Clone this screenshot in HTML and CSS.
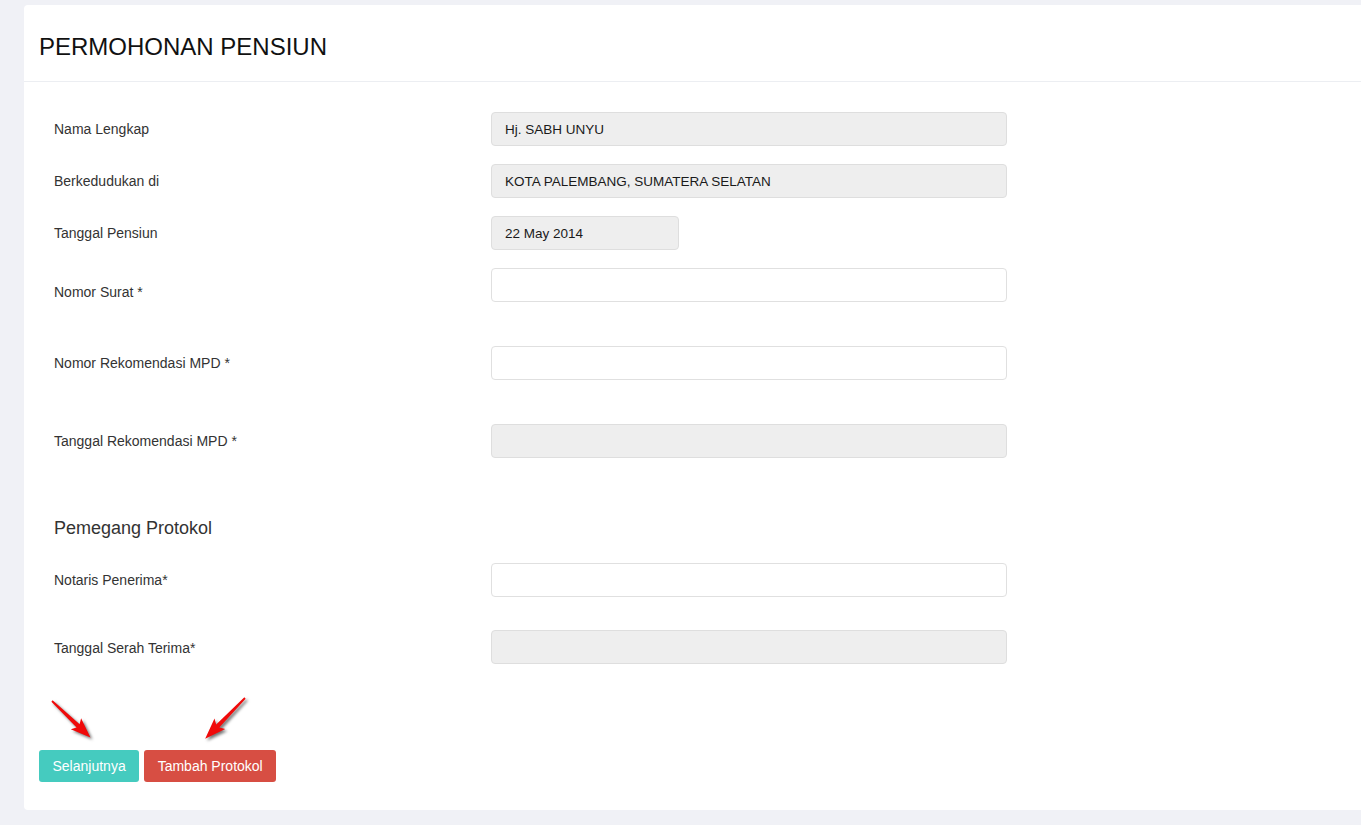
FILE: index.html
```html
<!DOCTYPE html>
<html lang="id">
<head>
<meta charset="utf-8">
<title>Permohonan Pensiun</title>
<link rel="stylesheet" href="styles.css">
</head>
<body>
<div class="card">
  <div class="card-header">
    <h1 class="card-title">PERMOHONAN PENSIUN</h1>
  </div>
  <form class="card-body">
    <div class="form-row">
      <label class="form-label">Nama Lengkap</label>
      <div class="form-control readonly">Hj. SABH UNYU</div>
    </div>
    <div class="form-row">
      <label class="form-label">Berkedudukan di</label>
      <div class="form-control readonly">KOTA PALEMBANG, SUMATERA SELATAN</div>
    </div>
    <div class="form-row">
      <label class="form-label">Tanggal Pensiun</label>
      <div class="form-control readonly short">22 May 2014</div>
    </div>
    <div class="form-row tall">
      <label class="form-label low">Nomor Surat *</label>
      <div class="form-control"></div>
    </div>
    <div class="form-row tall">
      <label class="form-label">Nomor Rekomendasi MPD *</label>
      <div class="form-control"></div>
    </div>
    <div class="form-row last">
      <label class="form-label">Tanggal Rekomendasi MPD *</label>
      <div class="form-control readonly"></div>
    </div>
    <h2 class="section-title">Pemegang Protokol</h2>
    <div class="form-row mid">
      <label class="form-label">Notaris Penerima*</label>
      <div class="form-control"></div>
    </div>
    <div class="form-row final">
      <label class="form-label">Tanggal Serah Terima*</label>
      <div class="form-control readonly"></div>
    </div>
    <div class="actions">
      <svg class="arrows" width="300" height="60" viewBox="0 0 300 60">
        <g fill="#f00a0a">
          <polygon transform="translate(13,11) rotate(43.5)" points="0,-0.9 36,-2.2 33,-7.5 53,0 33,7.5 36,2.2 0,0.9"/>
          <polygon transform="translate(206,8) rotate(134.3)" points="0,-0.9 39,-2.2 36,-7.5 57,0 36,7.5 39,2.2 0,0.9"/>
        </g>
      </svg>
      <button type="button" class="btn btn-teal">Selanjutnya</button>
      <button type="button" class="btn btn-red">Tambah Protokol</button>
    </div>
  </form>
</div>
</body>
</html>
```
FILE: styles.css
```css
html, body {
  margin: 0;
  padding: 0;
  overflow: hidden;
  height: 100%;
}
body {
  background: #f0f1f6;
  font-family: "Liberation Sans", Arial, sans-serif;
  color: #333;
  padding-top: 5px;
  box-sizing: border-box;
}
.card {
  background: #fff;
  margin-left: 24px;
  margin-right: -12px;
  border-radius: 4px;
}
.card-header {
  height: 76px;
  border-bottom: 1px solid #eceef2;
  padding: 0 15px;
  display: flex;
  align-items: center;
}
.card-title {
  margin: 8px 0 0;
  font-size: 24px;
  font-weight: normal;
  color: #111;
}
.card-body {
  padding: 30px 0 28px 30px;
  margin: 0;
}
.form-row {
  display: flex;
  align-items: center;
  margin-bottom: 18px;
}
.form-row.tall { margin-bottom: 44px; }
.form-row.last { margin-bottom: 60px; }
.form-row.mid { margin-bottom: 33px; }
.form-row.final { margin-bottom: 86px; }
.form-label {
  width: 437px;
  flex: none;
  font-size: 14px;
  color: #333;
}
.form-label.low { padding-top: 14px; }
.form-row.final .form-label { padding-top: 2px; }
.form-control {
  width: 516px;
  height: 34px;
  box-sizing: border-box;
  border: 1px solid #e0e0e0;
  border-radius: 4px;
  background: #fff;
  padding: 0 13px;
  font-size: 13.5px;
  color: #1a1a1a;
  display: flex;
  align-items: center;
}
.form-control.readonly {
  background: #eeeeee;
  border-color: #dedede;
}
.form-control.short { width: 188px; }
.section-title {
  margin: 0 0 25px;
  font-size: 18px;
  line-height: 20px;
  font-weight: normal;
  color: #333;
}
.actions {
  position: relative;
  display: flex;
  gap: 5px;
  margin-left: -15px;
}
.arrows {
  position: absolute;
  left: 0;
  top: -60px;
  overflow: visible;
  filter: drop-shadow(2px 2px 1.5px rgba(0, 0, 0, 0.55));
}
.btn {
  height: 32px;
  padding: 0 13.5px;
  border: none;
  border-radius: 3px;
  font-family: "Liberation Sans", Arial, sans-serif;
  font-size: 14px;
  color: #fff;
}
.btn-teal { background: #45cbbf; }
.btn-red { background: #d74e43; }
```
